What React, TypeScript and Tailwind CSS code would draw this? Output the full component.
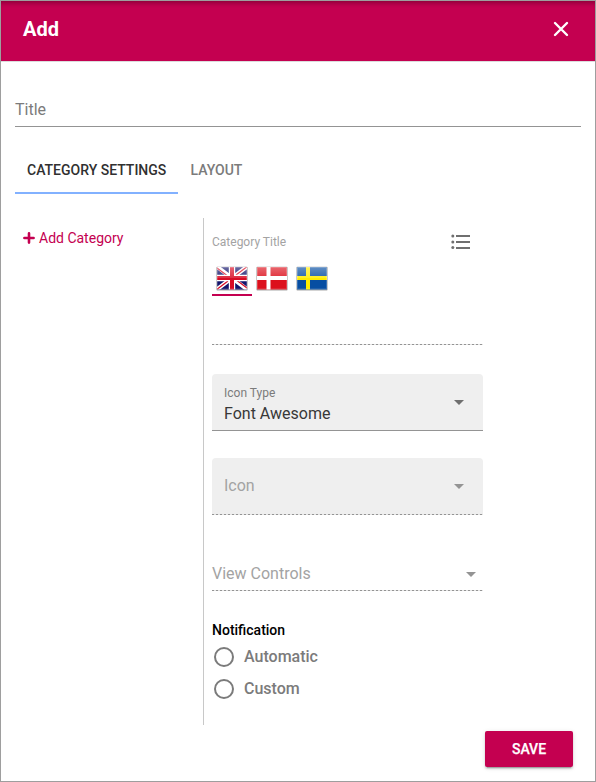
import type { ReactNode } from 'react'

function Caret({ className }: { className: string }) {
  return (
    <svg width="10" height="5" viewBox="0 0 10 5" className={className}>
      <path d="M0 0h10L5 5z" fill="currentColor" />
    </svg>
  )
}

function Dashes() {
  return (
    <div className="h-px w-[271px] bg-[repeating-linear-gradient(to_right,#949494_0_2px,#e4e4e4_2px_4px)]" />
  )
}

function Flag({ id, children }: { id: string; children: ReactNode }) {
  return (
    <svg width="34" height="26" viewBox="-1 -1 34 26">
      <defs>
        <linearGradient id={id} x1="0" y1="0" x2="0" y2="1">
          <stop offset="0" stopColor="#fff" stopOpacity="0.38" />
          <stop offset="0.5" stopColor="#fff" stopOpacity="0.14" />
          <stop offset="0.52" stopColor="#fff" stopOpacity="0" />
        </linearGradient>
        <clipPath id={id + '-clip'}>
          <rect x="1" y="1" width="30" height="22.5" rx="0.5" />
        </clipPath>
      </defs>
      <rect x="0.4" y="0.8" width="31.2" height="23.8" rx="1" fill="#000" opacity="0.35" />
      <g clipPath={`url(#${id}-clip)`}>
        {children}
        <rect width="32" height="24" fill={`url(#${id})`} />
      </g>
      <rect x="1.5" y="1.5" width="29" height="21.5" fill="none" stroke="#fff" opacity="0.2" />
    </svg>
  )
}

function Radio({ label }: { label: string }) {
  return (
    <label className="flex h-8 items-center">
      <span className="ml-[2px] size-5 rounded-full border-2 border-[#7b7b7b]" />
      <span className="ml-[10px] text-base leading-5 font-medium text-[#7b7b7b]">{label}</span>
    </label>
  )
}

export default function App() {
  return (
    <div className="flex h-[782px] w-[596px] flex-col overflow-hidden border border-[#9e9e9e] bg-white font-[Roboto,sans-serif]">
      <header className="flex h-[61px] shrink-0 items-center justify-between border-b border-[#dcdcdc] bg-[#c40050] bg-clip-padding pr-[26px] pb-[5px] pl-[22px] shadow-[inset_0_5px_5px_-3px_rgba(0,0,0,0.3)]">
        <h1 className="text-xl leading-6 font-bold text-white">Add</h1>
        <svg width="16" height="16" viewBox="0 0 16 16" stroke="#fff" strokeWidth="2.4" strokeLinecap="round">
          <path d="M2 2l12 12M14 2L2 14" />
        </svg>
      </header>

      <div className="mx-[14px] mt-[36px] h-[29px] shrink-0 border-b border-[#949494] text-base leading-6 text-[#7b7b7b]">Title</div>

      <nav className="ml-[14px] mt-[21px] flex h-[46px] shrink-0 text-sm leading-[44px] font-medium">
        <div className="w-[163px] border-b-2 border-[#82b1ff] pl-3 text-[#303030]">CATEGORY SETTINGS</div>
        <div className="ml-[12.5px] text-[#7b7b7b]">LAYOUT</div>
      </nav>

      <main className="mt-6 flex h-[507px] shrink-0">
        <aside className="w-[203px] border-r border-[#c8c8c8]">
          <button className="mt-[10px] ml-[22px] flex h-5 items-center gap-1 text-sm text-[#c40050]">
            <svg width="12" height="12" viewBox="0 0 12 12" stroke="currentColor" strokeWidth="2.6" strokeLinecap="round">
              <path d="M6 1.4v9.2M1.4 6h9.2" />
            </svg>
            Add Category
          </button>
        </aside>
        <section className="ml-2 flex w-[271px] flex-col">
          <div className="mt-[14px] flex h-5 items-center justify-between pr-[13px]">
            <span className="text-xs text-[#a3a3a3]">Category Title</span>
            <svg width="19" height="15" viewBox="0 0 19 15" fill="#6f6f6f" className="mb-[2px]">
              <circle cx="1.8" cy="2" r="1.5" />
              <circle cx="1.8" cy="8" r="1.5" />
              <circle cx="1.8" cy="13.5" r="1.5" />
              <path d="M5 1h14v2H5zM5 7h14v2H5zM5 13h14v2H5z" />
            </svg>
          </div>
          <div className="mt-[13px] flex h-[31px]">
            <div className="flex w-10 justify-center border-b-2 border-[#c40050]">
              <Flag id="uk">
                <rect width="32" height="24" fill="#13146b" />
                <path d="M0 0l32 24M32 0L0 24" stroke="#fff" strokeWidth="4.2" />
                <path d="M0 1.2l12 9M32 0L20 9M0 24l12-9M32 22.8l-12-9" stroke="#d80b24" strokeWidth="1.3" />
                <path d="M16 0v24M0 12h32" stroke="#fff" strokeWidth="6.4" />
                <path d="M16 0v24M0 12h32" stroke="#d80b24" strokeWidth="4" />
              </Flag>
            </div>
            <div className="flex w-10 justify-center">
              <Flag id="dk">
                <rect width="32" height="24" fill="#dc101c" />
                <path d="M12.5 0v24M0 12h32" stroke="#fff" strokeWidth="4" />
              </Flag>
            </div>
            <div className="flex w-10 justify-center">
              <Flag id="se">
                <rect width="32" height="24" fill="#074ea2" />
                <path d="M12 0v24M0 12h32" stroke="#ffed00" strokeWidth="4" />
              </Flag>
            </div>
          </div>
          <div className="mt-12"><Dashes /></div>

          <div className="mt-[29px] flex h-[57px] items-center justify-between rounded-t border-b border-[#949494] bg-[#efefef] pr-[19px] pl-3">
            <div className="pt-1">
              <div className="text-xs leading-[18px] text-[#7b7b7b]">Icon Type</div>
              <div className="-mb-px pt-px text-base leading-[22px] text-[#383838]">Font Awesome</div>
            </div>
            <Caret className="text-[#6f6f6f]" />
          </div>

          <div className="mt-[27px] flex h-14 items-center justify-between rounded-t bg-[#efefef] pr-[19px] pl-3 text-base text-[#a3a3a3]">
            <span>Icon</span>
            <Caret className="text-[#949494]" />
          </div>
          <Dashes />

          <div className="mt-[47px] flex h-7 items-start justify-between pr-[7px] text-base leading-6 text-[#a3a3a3]">
            <span>View Controls</span>
            <Caret className="mt-[10px] text-[#949494]" />
          </div>
          <Dashes />

          <h2 className="mt-[29px] text-sm leading-5 font-medium text-black">Notification</h2>
          <div className="mt-[1px]">
            <Radio label="Automatic" />
            <Radio label="Custom" />
          </div>
        </section>
      </main>

      <button className="mt-[6px] mr-[22px] h-9 w-[88px] shrink-0 self-end rounded-[2px] bg-[#c40050] text-sm font-medium text-white [-webkit-text-stroke:0.25px_white] shadow-[0_3px_1px_-2px_rgba(0,0,0,0.2),0_2px_2px_0_rgba(0,0,0,0.14),0_1px_5px_0_rgba(0,0,0,0.12)]">
        SAVE
      </button>
    </div>
  )
}
